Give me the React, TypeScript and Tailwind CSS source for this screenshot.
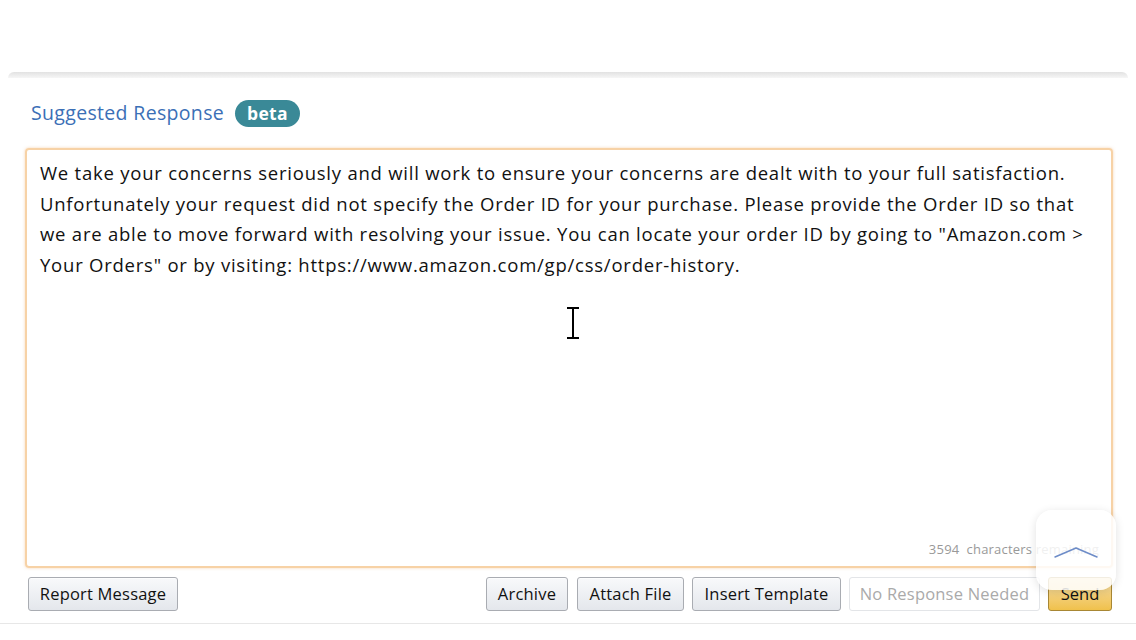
const buttonClass =
  'h-[34px] rounded-[3px] border border-[#a9acb2] bg-gradient-to-b from-[#f8f9fb] to-[#e4e7ec] text-[16.5px] text-[#111] tracking-[0.2px] shadow-[0_1px_0_rgba(255,255,255,0.6)_inset]';

const lines = [
  'We take your concerns seriously and will work to ensure your concerns are dealt with to your full satisfaction.',
  'Unfortunately your request did not specify the Order ID for your purchase. Please provide the Order ID so that',
  'we are able to move forward with resolving your issue. You can locate your order ID by going to "Amazon.com >',
  'Your Orders" or by visiting: https://www.amazon.com/gp/css/order-history.',
];

const App = function() {
  return (
    <div className='relative w-[1136px] h-[640px] bg-white overflow-hidden' style={{ fontFamily: '"Open Sans", "Noto Sans", sans-serif' }}>
      <div className='h-[72px]' />
      <div className='mx-[8px] h-[6px] rounded-t-[6px] bg-gradient-to-b from-[#e2e2e2] to-[#f6f6f6]' />

      <div className='px-[25px] pt-[21px]'>
        <div className='flex items-center gap-[11px] pl-[6px] h-[28px]'>
          <h2 className='text-[19.5px] text-[#3b6fb6] tracking-[0.33px]'>Suggested Response</h2>
          <span className='h-[27px] px-[12px] rounded-full bg-[#3a8997] text-white text-[17.5px] font-bold leading-[27px] tracking-[0.3px]'>beta</span>
        </div>

        <div className='relative mt-[21px] h-[420px] w-[1088px] rounded-[4px] border-2 border-[#f7d2a6] shadow-[0_0_3px_rgba(240,170,100,0.5)] px-[13px] pt-[8px]'>
          <div className='text-[18.5px] leading-[30.7px] text-[#111] tracking-[0.77px] whitespace-nowrap'>
            {lines.map((line) => <p key={line}>{line}</p>)}
          </div>
          <span className='absolute right-[12px] bottom-[7px] text-[13px] text-[#999] tracking-[0.2px]'>3594&nbsp; characters remaining</span>
        </div>

        <div className='flex items-center mt-[8px] h-[36px]'>
          <button className={`${buttonClass} ml-[3px] w-[150px]`}>Report Message</button>
          <div className='flex-1' />
          <div className='flex items-center gap-[8px]'>
            <button className={`${buttonClass} w-[82px]`}>Archive</button>
            <button className={`${buttonClass} w-[107px] ml-[1px]`}>Attach File</button>
            <button className={`${buttonClass} w-[149px]`}>Insert Template</button>
            <button className='h-[34px] w-[191px] rounded-[3px] border border-[#e3e5e8] bg-white text-[16.5px] text-[#aaa] tracking-[0.2px]'>No Response Needed</button>
            <button className='h-[34px] w-[64px] mr-[-1px] rounded-[3px] border border-[#a88734] bg-gradient-to-b from-[#f7dfa5] to-[#f0c14b] text-[16.5px] text-[#111]'>Send</button>
          </div>
        </div>
      </div>

      <div className='mt-[11px] h-px bg-[#e7e7e7]' />

      {/* scroll-to-top floating button */}
      <div className='absolute left-[1036px] top-[510px] w-[80px] h-[80px] rounded-[16px] bg-white/85 shadow-[0_2px_10px_rgba(0,0,0,0.12)] flex items-center justify-center'>
        <svg width='46' height='16' viewBox='0 0 46 16' fill='none' className='mt-[6px]'>
          <path d='M2 12 L23 3 L44 12' stroke='#6d8cc8' strokeWidth='1.5' strokeLinecap='round' strokeLinejoin='round' />
        </svg>
      </div>

      {/* text cursor */}
      <svg className='absolute left-[565px] top-[306px]' width='16' height='34' viewBox='0 0 16 34' fill='none'>
        <path d='M2 2 H14 M8 2 V32 M2 32 H14' stroke='#fff' strokeWidth='4' />
        <path d='M2 2 H14 M8 2 V32 M2 32 H14' stroke='#000' strokeWidth='2' />
      </svg>
    </div>
  );
};

export default App;
